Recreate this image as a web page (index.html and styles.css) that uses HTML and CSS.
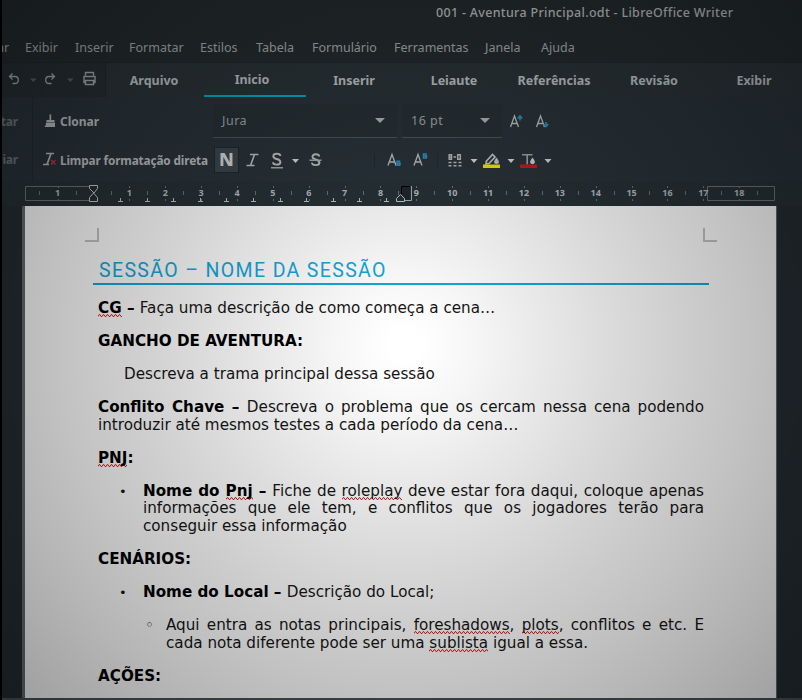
FILE: index.html
```html
<!DOCTYPE html>
<html lang="pt-BR">
<head>
<meta charset="utf-8">
<title>001 - Aventura Principal.odt - LibreOffice Writer</title>
<link rel="stylesheet" href="styles.css">
</head>
<body>
<div class="window">
  <header class="titlebar"><span class="title">001 - Aventura Principal.odt - LibreOffice Writer</span></header>
  <nav class="menubar">
    <span class="cut">ar</span><span>Exibir</span><span>Inserir</span><span>Formatar</span><span>Estilos</span><span>Tabela</span><span>Formulário</span><span>Ferramentas</span><span>Janela</span><span>Ajuda</span>
  </nav>
  <div class="tabrow">
    <div class="quick">
      <svg width="104" height="34" viewBox="0 0 104 34" fill="none">
        <g stroke="#a3a9ab" stroke-width="1.3"><path d="M10.5 10.500 7.500 13.500l3 3M8 13.500h5a3.300 3.500 0 0 1 0 7H10.500"/><path d="M49.500 10.500l3 3-3 3M52 13.500h-5a3.300 3.500 0 0 0 0 7H49.500"/></g>
        <path d="M28 15.500h6.500l-3.250 3.500zM65 15.500h6.500l-3.250 3.500z" fill="#596063"/>
        <path d="M83.500 12.500v-3h8v3M84 19.500h-2v-6h11v6h-2M83.500 17.500h8v4h-8z" stroke="#a3a9ab" stroke-width="1.400"/>
      </svg>
    </div>
    <div class="tabs"><span>Arquivo</span><span class="active">Inicio</span><span>Inserir</span><span>Leiaute</span><span>Referências</span><span>Revisão</span><span>Exibir</span></div>
  </div>
  <div class="toolbar">
    <div class="clip"><span>tar</span><span>iar</span></div>
    <div class="actions">
      <div class="action"><svg width="14" height="16" viewBox="0 0 14 16"><path d="M6.500 1.500h1.700V7h-1.700zM3.500 7h8v2h-8zM3 9.500h9V14H1.500q1.800-1.500 1.500-4.500z" fill="#b5babb"/></svg><span>Clonar</span></div>
      <div class="action"><svg width="14" height="16" viewBox="0 0 14 16" fill="none"><path d="M3 2.500h8M0 13.500h6M8 2.500 4 13.500" stroke="#b5babb" stroke-width="1.700"/><path d="m8 9 4.500 4.500M12.500 9 8 13.500" stroke="#c8343f" stroke-width="1.300"/></svg><span class="long">Limpar formatação direta</span></div>
    </div>
    <div class="format">
      <div class="fields">
        <div class="field font"><span>Jura</span><i class="caret"></i></div>
        <div class="field size"><span>16 pt</span><i class="caret"></i></div>
        <svg width="52" height="34" viewBox="-2 0 52 34" fill="none"><g stroke="#b9bebf" stroke-width="1.300"><path d="m6.500 23 4-11 4 11M8 19.500h5M32.500 23l4-11 4 11M34 19.500h5"/></g><path d="M16 16.500v-4.500M13.700 14.500 16 12l2.300 2.500M42 18v4.500M39.700 20 42 22.500l2.300-2.500" stroke="#2f8fc0" stroke-width="1.600"/></svg>
      </div>
      <div class="styles">
        <span class="bold">N</span>
        <svg width="346" height="26" viewBox="238 0 346 26" fill="none">
          <path d="M250 7.500h8.500M246.500 18.500h8M254.500 7.500l-4 11" stroke="#bcc1c2" stroke-width="1.600"/>
          <g stroke="#bcc1c2" stroke-width="1.900">
            <path d="M280.300 9q0-2.200-3.500-2.200T273.300 9.200q0 2 3.500 2.800t3.600 3.200q0 2.400-3.700 2.400t-3.700-2.300"/>
            <path d="M319.200 9.500q-.2-2.200-3.500-2.200T312.500 9.700q0 2 3.200 2.800t3.800 3q0 2.600-3.800 2.600t-3.700-2.500"/>
          </g>
          <path d="M271 20.800h12M309.500 13.200h12" stroke="#a4aaac" stroke-width="1.400"/>
          <path d="M292 12h7l-3.500 4zM470.500 12h7l-3.500 4zM507.500 12h7l-3.500 4zM544.500 12h7l-3.500 4z" fill="#d6d9da"/>
          <path d="M374.500 7v13M437.500 7v13" stroke="#222a2e"/>
          <g stroke="#b9bebf" stroke-width="1.300"><path d="m388 18.500 4-11 4 11M389.500 15h5.200M414 18.500l4-11 4 11M415.500 15h5.200"/></g>
          <g stroke="#2f8fc0" stroke-width="1.500"><path d="M397 14.200h2.500v4H397zM396.500 16.300h3.500v2M423.500 7h2.500v4h-2.500zM423 9h3.500v2"/></g>
          <g stroke="#b4b9ba" stroke-width="1.500"><path d="M449.200 7.700h2.300v4.600h-2.300zM449 10h3M453.500 10h2.500M457.700 7.700h2.600v4.600h-2.600z"/><path d="M448.500 15.500h13M448.500 18.800h13" stroke-dasharray="3 2"/></g>
          <path d="m486.500 14 6-6.500 2.500 2.500-6 6.500-3 .5z" stroke="#c2c6c7" stroke-width="1.700"/><path d="M496.500 10.500q5 6 0 6.500-5-.5 0-6.500z" fill="#c2c6c7"/><path d="M483 17.500h17V21h-17z" fill="#ecec00"/>
          <path d="M522 7.700h10.500M527.200 7.700V17.500" stroke="#9da3a5" stroke-width="1.600"/><path d="M532.500 10.500q5 6 0 6.800-5-.8 0-6.800z" fill="#d0d3d4"/><path d="M520 17.500h17V21h-17z" fill="#c41c20"/>
        </svg>
      </div>
    </div>
  </div>
  <div class="ruler">
    <svg id="ruler" width="802" height="24" viewBox="0 182 802 24" fill="none"></svg>
  </div>
  <main class="desk">
    <article class="page">
      <div class="corners"><i class="corner left"></i><i class="corner right"></i></div>
      <h1><span>SESSÃO – NOME DA SESSÃO</span></h1>
      <p><b><u>CG</u> – </b>Faça uma descrição de como começa a cena…</p>
      <p><b>GANCHO DE AVENTURA:</b></p>
      <p class="indent">Descreva a trama principal dessa sessão</p>
      <p><b>Conflito Chave – </b>Descreva o problema que os cercam nessa cena podendo introduzir até mesmos testes a cada período da cena…</p>
      <p><b><u>PNJ</u>:</b></p>
      <p class="item"><b>Nome do <u>Pnj</u> – </b>Fiche de <u>roleplay</u> deve estar fora daqui, coloque apenas informações que ele tem, e conflitos que os jogadores terão para conseguir essa informação</p>
      <p><b>CENÁRIOS:</b></p>
      <p class="item"><b>Nome do Local – </b>Descrição do Local;</p>
      <p class="item sub">Aqui entra as notas principais, <u>foreshadows</u>, <u>plots</u>, conflitos e etc. E cada nota diferente pode ser uma <u>sublista</u> igual a essa.</p>
      <p><b>AÇÕES:</b></p>
    </article>
  </main>
  <div class="vignette"></div>
</div>
<script src="ruler.js"></script>
</body>
</html>
```
FILE: styles.css
```css
* { box-sizing: border-box; }
body { margin: 0; width: 802px; height: 700px; overflow: hidden; background: #000; }
.window { position: relative; width: 802px; height: 700px; border-left: 2px solid #000; background: #242b2e; overflow: hidden; font-family: "Noto Sans", sans-serif; color: #a4abad; display: flex; flex-direction: column; }
.titlebar { height: 32px; padding-left: 434px; line-height: 25px; font-size: 12.5px; font-weight: 500; letter-spacing: .31px; color: #b9bebf; white-space: nowrap; }
.menubar { height: 30px; display: grid; grid-template-columns: 23px 50px 54px 71px 56px 56px 82px 91px 56px 60px; line-height: 31px; font-size: 12.500px; white-space: nowrap; }
.cut { margin-left: -5px; }
.tabrow { height: 35px; display: flex; background: #2a3338; border-top: 1px solid #20272b; }
.quick { width: 104px; border-right: 1px solid #20272b; background: #252e32; }
.quick svg { display: block; }
.tabs { display: grid; grid-template-columns: repeat(7, 100px); margin-left: -2px; font-size: 12.5px; font-weight: 700; color: #bcc1c3; line-height: 35px; text-align: center; }
.tabs span { height: 34px; }
.tabs .active { border-bottom: 2px solid #00acc1; line-height: 33px; width: 102px; padding-right: 6px; }
.toolbar { height: 85px; display: flex; background: #29333a; font-size: 12px; }
.clip { width: 31px; padding: 7px 14px 0 0; border-right: 1px solid #222a2e; display: flex; flex-direction: column; align-items: flex-end; font-weight: 700; letter-spacing: -.2px; color: #6c7478; }
.clip span { height: 38px; line-height: 35px; }
.actions { width: 180px; padding: 7px 0 0 10px; font-weight: 700; color: #b9bec0; white-space: nowrap; }
.action { height: 38px; display: flex; align-items: flex-start; gap: 3px; line-height: 35px; }
.action svg { margin-top: 9px; flex: none; }
.long { letter-spacing: -.14px; font-size: 11.800px; line-height: 36px; }
.format { padding-top: 7px; }
.fields { display: flex; height: 34px; }
.field { height: 34px; display: flex; justify-content: space-between; align-items: center; background: #273035; border-bottom: 1px solid #4b555a; font-size: 12.5px; color: #9da5a8; }
.field span { margin-top: -1px; letter-spacing: .5px; }
.font { width: 184px; padding: 0 12px 0 9px; margin-right: 5px; }
.size { width: 100px; padding: 0 12px 0 9px; }
.caret { border: 5px solid transparent; border-top-color: #aeb4b6; border-bottom: 0; }
.styles { display: flex; margin-top: 9px; height: 26px; }
.bold { width: 25px; margin-left: 1px; margin-right: -1px; background: #3b464d; outline: 1px solid #20272b; outline-offset: -1px; text-align: center; line-height: 25px; font-size: 18px; font-weight: 800; color: #d2d5d6; }
.ruler { height: 24px; margin-left: -2px; border-left: 2px solid #000; background: #273136; }
.ruler svg { display: block; margin-left: -2px; }
.ruler text { font: 700 9px "Noto Sans", sans-serif; fill: #b4bdc2; text-anchor: middle; }
.desk { height: 494px; padding-left: 20px; background: #252d33; border-bottom: 2px solid #4a5256; }
.page { width: 755px; height: 492px; border-left: 3px solid #646b6e; border-right: 1px solid #646b6e; background: #fff; padding: 22px 72px 0 73px; font: 15.180px/17.7px "DejaVu Sans", sans-serif; color: #151515; overflow: hidden; }
.corners { height: 14px; margin: 0 -13px; display: flex; justify-content: space-between; }
.corner { width: 14px; height: 14px; border-bottom: 2px solid #c4c4c4; }
.corner.left { border-right: 2px solid #c4c4c4; }
.corner.right { border-left: 2px solid #c4c4c4; }
h1 { margin: 8px -5px 15px -5px; height: 35px; padding: 11px 0 0 6px; font: 400 19.500px/20px Roboto, sans-serif; letter-spacing: 1.360px; color: #14a8dc; border-bottom: 2px solid #14a8dc; white-space: nowrap; }
p { margin: 0 0 15.3px; text-align: justify; }
b { color: #000; }
.indent { padding-left: 26px; }
.item { position: relative; padding-left: 45px; }
.item::before { content: "•"; position: absolute; left: 21px; font-size: 13px; }
.sub { padding-left: 68px; }
.sub::before { content: "◦"; left: 47px; font-size: 15px; }
u { text-decoration: none; background: url("data:image/svg+xml,%3Csvg xmlns='http://www.w3.org/2000/svg' width='4' height='3'%3E%3Cpath d='M0 2.500 1 .7h1L3 2.500h1' fill='none' stroke='%23e02028' stroke-width='1'/%3E%3C/svg%3E") repeat-x left bottom; }
.vignette { position: absolute; inset: 0; pointer-events: none; background: radial-gradient(circle at 403px 345px, rgba(0,0,0,0) 15px, rgba(0,0,0,.035) 70px, rgba(0,0,0,.09) 140px, rgba(0,0,0,.145) 210px, rgba(0,0,0,.195) 280px, rgba(0,0,0,.24) 345px, rgba(0,0,0,.29) 415px, rgba(0,0,0,.38) 530px); }
```
FILE: ruler.js
```js
// Draws the horizontal ruler: centimetre labels, half ticks, tab stops and indent markers.
const svg = document.getElementById('ruler');
const origin = 93.5, cm = 35.87;
let out = '<path d="M93 186.500H25.500v14H93M707.500 186.500h67v14h-67z" stroke="#6a7478"/>';
for (let n = -1; n <= 18; n++) {
  const x = origin + n * cm;
  if (n !== 0) {
    out += `<text x="${x}" y="196.300">${Math.abs(n)}</text>`;
    out += `<path d="M${Math.round(x) + .5} 186v2M${Math.round(x) + .5} 199v2" stroke="#69757b"/>`;
  }
  const half = Math.round(x + cm / 2) + .5;
  out += `<path d="M${half} 191v4" stroke="#69757b"/>`;
}
out += '<path d="M39.500 191v4" stroke="#69757b"/>';
for (let i = 0; i < 11; i++) {
  const x = Math.round(120 + i * 26.6) + .5;
  out += `<path d="M${x} 198v3M${x - 2.5} 201.500h5" stroke="#bcc4c7"/>`;
}
out += '<path d="M89.500 185.500h8v3l-3.500 4.500-4.500-4.500zM93.500 193l4 4.500v4h-8v-4z" fill="#252e32" stroke="#c3c9cb"/>';
out += '<path d="M401 186.500h9v14h-9z" fill="#20282c"/><path d="M401.500 194v-7.500H410" stroke="#000"/><path d="M411.500 186v14.500H405" stroke="#a8b0b4"/>';
out += '<path d="m400.500 194.500 4 4v3h-8v-3z" fill="#252e32" stroke="#c3c9cb"/>';
svg.innerHTML = out;
```
